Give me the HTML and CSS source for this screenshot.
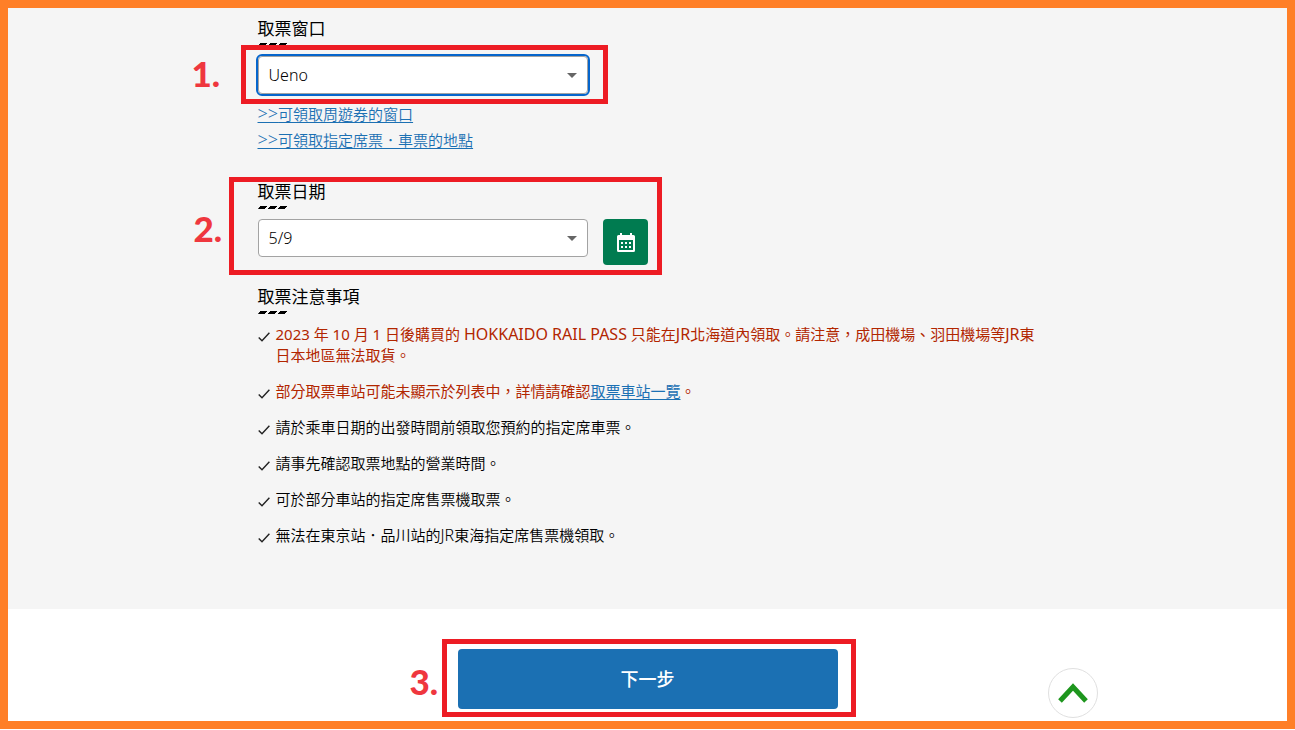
FILE: index.html
```html
<!DOCTYPE html>
<html lang="zh-Hant">
<head>
<meta charset="utf-8">
<meta name="viewport" content="width=device-width, initial-scale=1">
<title>取票窗口</title>
<link rel="stylesheet" href="styles.css">
</head>
<body>
<div class="page">
  <main class="panel">
    <div class="container">
      <section class="field">
        <h2 class="heading"><label for="office">取票窗口</label></h2>
        <div class="select-box">
          <select id="office" class="select select-active"><option>Ueno</option></select>
          <svg class="arrow" viewBox="0 0 10 5" aria-hidden="true"><path d="M0 0h10L5 5z"/></svg>
        </div>
        <div class="links">
          <a href="#offices"><span class="lead">&gt;&gt;</span>可領取周遊券的窗口</a>
          <a href="#places"><span class="lead">&gt;&gt;</span>可領取指定席票．車票的地點</a>
        </div>
        <span class="mark mark-office"></span>
        <span class="step step-office">1.</span>
      </section>

      <section class="field field-date">
        <h2 class="heading"><label for="date">取票日期</label></h2>
        <div class="row">
          <div class="select-box">
            <select id="date" class="select"><option>5/9</option></select>
            <svg class="arrow" viewBox="0 0 10 5" aria-hidden="true"><path d="M0 0h10L5 5z"/></svg>
          </div>
          <button class="calendar" type="button" aria-label="日曆">
            <svg viewBox="0 0 18 19" width="18" height="19" aria-hidden="true">
              <path fill="#fff" fill-rule="evenodd" d="M3 0h2v2h8V0h2v2h1.500a1.500 1.500 0 0 1 1.500 1.500v14a1.500 1.500 0 0 1-1.500 1.500h-15A1.500 1.500 0 0 1 0 17.500v-14A1.500 1.500 0 0 1 1.500 2H3zM2 7v10h14V7z"/>
              <path fill="#fff" d="M4 9h2v2H4zM8 9h2v2H8zM12 9h2v2h-2zM4 13h2v2H4zM8 13h2v2H8zM12 13h2v2h-2z"/>
            </svg>
          </button>
        </div>
        <span class="mark mark-date"></span>
        <span class="step step-date">2.</span>
      </section>

      <section class="notes">
        <h2 class="heading">取票注意事項</h2>
        <ul class="list">
          <li class="item alert"><svg class="check" viewBox="0 0 12 10" aria-hidden="true"><path d="M.7 5.500 4 8.800 11.400.8"/></svg><span>2023 年 10 月 1 日後購買的 <span class="latin">HOKKAIDO RAIL PASS</span> 只能在<span class="latin">JR</span>北海道內領取。請注意，成田機場、羽田機場等<span class="latin">JR</span>東日本地區無法取貨。</span></li>
          <li class="item alert"><svg class="check" viewBox="0 0 12 10" aria-hidden="true"><path d="M.7 5.500 4 8.800 11.400.8"/></svg><span>部分取票車站可能未顯示於列表中，詳情請確認<a href="#stations">取票車站一覽</a>。</span></li>
          <li class="item"><svg class="check" viewBox="0 0 12 10" aria-hidden="true"><path d="M.7 5.500 4 8.800 11.400.8"/></svg><span>請於乘車日期的出發時間前領取您預約的指定席車票。</span></li>
          <li class="item"><svg class="check" viewBox="0 0 12 10" aria-hidden="true"><path d="M.7 5.500 4 8.800 11.400.8"/></svg><span>請事先確認取票地點的營業時間。</span></li>
          <li class="item"><svg class="check" viewBox="0 0 12 10" aria-hidden="true"><path d="M.7 5.500 4 8.800 11.400.8"/></svg><span>可於部分車站的指定席售票機取票。</span></li>
          <li class="item"><svg class="check" viewBox="0 0 12 10" aria-hidden="true"><path d="M.7 5.500 4 8.800 11.400.8"/></svg><span>無法在東京站．品川站的<span class="latin">JR</span>東海指定席售票機領取。</span></li>
        </ul>
      </section>
    </div>
  </main>

  <footer class="footer">
    <div class="container actions">
      <div class="next-box">
        <button class="next" type="button">下一步</button>
        <span class="mark mark-next"></span>
        <span class="step step-next">3.</span>
      </div>
      <a class="top" href="#" aria-label="回到頁首">
        <svg viewBox="0 0 30 20" width="30" height="20" aria-hidden="true"><path d="M2 18 15 4l13 14" fill="none" stroke="#1e961e" stroke-width="5"/></svg>
      </a>
    </div>
  </footer>
</div>
</body>
</html>
```
FILE: styles.css
```css
* { box-sizing: border-box; }

body {
  margin: 0;
  background: #fff;
  color: #000;
  font-family: "Noto Sans", "Noto Sans CJK TC", sans-serif;
  font-size: 15px;
  font-weight: 350;
  line-height: 21px;
}

a { color: #1b70b3; text-underline-offset: 2px; }

.latin { font-size: 16px; line-height: 1; }
.lead { font-size: 18px; line-height: 1; }

.page { border: 8px solid #ff7f27; }

.panel {
  padding: 10px 16px 63px;
  background: #f5f5f5;
}

.container {
  position: relative;
  max-width: 780px;
  margin: 0 auto;
}

.field { position: relative; }
.field-date { margin-top: 28px; }
.notes { margin-top: 21px; }

.heading {
  margin: 0 0 10px;
  font-size: 17px;
  font-weight: 400;
  line-height: 22px;
}

.heading::after {
  content: "";
  display: block;
  width: 28px;
  height: 3px;
  margin: 3px 0 0 1px;
  background: repeating-linear-gradient(90deg, #000 0 7px, transparent 7px 10px);
  transform: skewX(-35deg);
}

.select-box {
  position: relative;
  width: 330px;
  max-width: 100%;
}

.select {
  display: block;
  width: 100%;
  height: 38px;
  padding: 0 32px 0 10px;
  appearance: none;
  border: 1px solid #a3a3a3;
  border-radius: 4px;
  background: #fff;
  color: #000;
  font: inherit;
  font-size: 16px;
}

.select-active { outline: 2px solid #0565cc; }

.arrow {
  position: absolute;
  top: 17px;
  right: 11px;
  width: 10px;
  height: 5px;
  fill: #666;
  pointer-events: none;
}

.links {
  display: flex;
  flex-direction: column;
  align-items: flex-start;
  margin-top: 7px;
  line-height: 26px;
}

.row {
  display: flex;
  align-items: flex-start;
  gap: 15px;
}

.calendar {
  display: flex;
  align-items: center;
  justify-content: center;
  width: 45px;
  height: 46px;
  padding: 0 0 0 1px;
  border: 0;
  border-radius: 4px;
  background: #007b50;
}

.list {
  display: flex;
  flex-direction: column;
  gap: 15px;
  margin: 0;
  padding: 0;
  list-style: none;
}

.item { display: flex; gap: 6px; }
.alert { color: #b22600; font-weight: 400; }

.check {
  flex: none;
  width: 12px;
  height: 10px;
  margin-top: 8px;
  fill: none;
  stroke: #222;
  stroke-width: 1.400;
}

.footer { padding: 40px 16px 12px; background: #fff; }
.actions { display: flex; justify-content: center; }
.next-box { position: relative; width: 380px; }

.next {
  display: block;
  width: 100%;
  height: 60px;
  border: 0;
  border-radius: 4px;
  background: #1b70b3;
  color: #fff;
  font: inherit;
  font-size: 18px;
  font-weight: 500;
}

.top {
  position: absolute;
  top: 19px;
  left: calc(100% + 10px);
  display: flex;
  align-items: center;
  justify-content: center;
  width: 50px;
  height: 50px;
  border: 1px solid #e0e0e0;
  border-radius: 50%;
  background: #fff;
}

/* Tutorial callouts drawn over the form */
.mark {
  position: absolute;
  border: 5px solid #ed1c24;
  pointer-events: none;
}

.mark-office { top: 27px; left: -17px; width: 367px; height: 59px; }
.mark-date { top: -4px; left: -29px; width: 433px; height: 98px; }
.mark-next { top: -10px; left: -16px; width: 414px; height: 78px; }

.step {
  position: absolute;
  color: #ef373e;
  font-family: Lato, "Noto Sans", sans-serif;
  font-size: 35px;
  font-weight: 900;
  line-height: 40px;
}

.step-office { top: 35px; left: -66px; }
.step-date { top: 27px; left: -64px; }
.step-next { top: 12px; left: -48px; }
```
